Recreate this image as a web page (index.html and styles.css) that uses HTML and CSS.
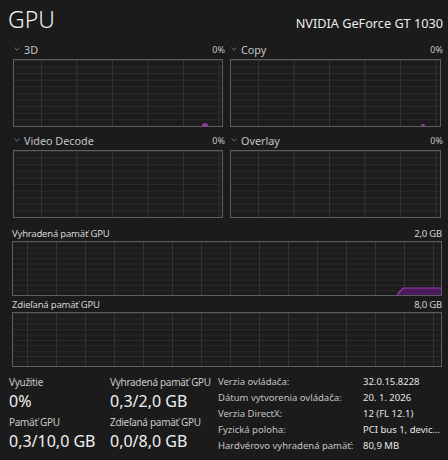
FILE: index.html
```html
<!DOCTYPE html>
<html lang="sk">
<head>
    <meta charset="UTF-8">
    <title>GPU</title>
    <link rel="stylesheet" href="styles.css">
</head>
<body>
    <div class="page">
        <header class="head">
            <h1 class="title">GPU</h1>
            <div class="model">NVIDIA GeForce GT 1030</div>
        </header>

        <section class="engines">
            <div class="engine">
                <div class="engine-head">
                    <span class="engine-name"><svg class="chev" viewBox="0 0 8 5"><polyline points="0.5,0.5 4,4 7.5,0.5"/></svg>3D</span>
                    <span class="pct">0%</span>
                </div>
                <div class="chart small"><span class="blip blip-3d"></span></div>
            </div>
            <div class="engine">
                <div class="engine-head">
                    <span class="engine-name"><svg class="chev" viewBox="0 0 8 5"><polyline points="0.5,0.5 4,4 7.5,0.5"/></svg>Copy</span>
                    <span class="pct">0%</span>
                </div>
                <div class="chart small"><span class="blip blip-copy"></span></div>
            </div>
            <div class="engine">
                <div class="engine-head">
                    <span class="engine-name"><svg class="chev" viewBox="0 0 8 5"><polyline points="0.5,0.5 4,4 7.5,0.5"/></svg>Video Decode</span>
                    <span class="pct">0%</span>
                </div>
                <div class="chart small"></div>
            </div>
            <div class="engine">
                <div class="engine-head">
                    <span class="engine-name"><svg class="chev" viewBox="0 0 8 5"><polyline points="0.5,0.5 4,4 7.5,0.5"/></svg>Overlay</span>
                    <span class="pct">0%</span>
                </div>
                <div class="chart small"></div>
            </div>
        </section>

        <section class="mem first">
            <div class="mem-head"><span>Vyhradená pamäť GPU</span><span>2,0 GB</span></div>
            <div class="chart wide">
                <svg class="usage" viewBox="0 0 44 9" preserveAspectRatio="none">
                    <polygon points="0,9 6,2 44,2 44,9" fill="#4a1a5a"/>
                    <polyline points="0,9 6,2 44,2" fill="none" stroke="#9a3cb8" stroke-width="1.2"/>
                </svg>
            </div>
        </section>

        <section class="mem">
            <div class="mem-head"><span>Zdieľaná pamäť GPU</span><span>8,0 GB</span></div>
            <div class="chart wide"></div>
        </section>

        <section class="stats">
            <div class="stat-col">
                <div class="stat-label">Využitie</div>
                <div class="stat-value">0%</div>
                <div class="stat-label">Pamäť GPU</div>
                <div class="stat-value">0,3/10,0 GB</div>
            </div>
            <div class="stat-col wide-col">
                <div class="stat-label">Vyhradená pamäť GPU</div>
                <div class="stat-value">0,3/2,0 GB</div>
                <div class="stat-label">Zdieľaná pamäť GPU</div>
                <div class="stat-value">0,0/8,0 GB</div>
            </div>
            <dl class="props">
                <dt>Verzia ovládača:</dt><dd>32.0.15.8228</dd>
                <dt>Dátum vytvorenia ovládača:</dt><dd>20. 1. 2026</dd>
                <dt>Verzia DirectX:</dt><dd>12 (FL 12.1)</dd>
                <dt>Fyzická poloha:</dt><dd>PCI bus 1, devic...</dd>
                <dt>Hardvérovo vyhradená pamäť:</dt><dd>80,9 MB</dd>
            </dl>
        </section>
    </div>
</body>
</html>
```

FILE: styles.css
```css
body {
    margin: 0;
    background: #1b1b1b;
    color: #d6d6d6;
    font-family: "Segoe UI", "Noto Sans", "Open Sans", sans-serif;
    white-space: nowrap;
}
.page {
    width: 448px;
    height: 460px;
    box-sizing: border-box;
    padding: 0 6px 0 12px;
    overflow: hidden;
}
.head {
    display: flex;
    justify-content: space-between;
    align-items: baseline;
    height: 41px;
    padding-top: 3px;
    box-sizing: border-box;
}
.title {
    margin: 0 0 0 -4px;
    font-size: 23px;
    font-weight: 300;
    line-height: 32px;
    color: #f2f2f2;
}
.model {
    font-size: 12.7px;
    color: #ececec;
    margin-right: -1px;
}

.engines {
    display: grid;
    grid-template-columns: 210px 211px;
    column-gap: 7px;
    row-gap: 5px;
    padding-left: 1px;
}
.engine-head {
    display: flex;
    justify-content: space-between;
    align-items: center;
    height: 16px;
    margin-bottom: 2px;
}
.engine-name {
    display: flex;
    align-items: center;
    font-size: 10.8px;
    color: #c4c4c4;
    margin-left: 1px;
}
.chev {
    width: 6px;
    height: 4px;
    margin-right: 4px;
    fill: none;
    stroke: #8a8a8a;
    stroke-width: 1;
}
.pct {
    font-size: 9px;
    color: #c4c4c4;
    margin-right: -2px;
}

.chart {
    position: relative;
    box-sizing: border-box;
    border: 1px solid #5e5e5e;
    background-color: #1c1c1c;
    background-image:
        linear-gradient(to right, #333 1px, transparent 1px),
        linear-gradient(to bottom, #2b2b2b 1px, transparent 1px);
}
.chart.small {
    height: 68px;
    background-size: 35.5px 100%, 100% 6.6px;
    background-position: 27px 0, 0 0;
}
.chart.wide {
    height: 55px;
    background-size: 29px 100%, 100% 5.4px;
    background-position: 14px 0, 0 0;
}

.blip {
    position: absolute;
    bottom: 0;
    height: 3px;
    border-radius: 3px 3px 0 0;
    background: #8e3aa6;
}
.blip-3d { left: 188px; width: 6px; }
.blip-copy { left: 190px; width: 4px; height: 2px; }

.mem.first { margin-top: 7px; }
.mem-head {
    display: flex;
    justify-content: space-between;
    align-items: center;
    height: 16px;
    font-size: 9.5px;
    letter-spacing: -0.2px;
    color: #d4d4d4;
}
.usage {
    position: absolute;
    right: 0;
    bottom: 0;
    width: 44px;
    height: 9px;
}

.stats {
    display: flex;
    margin: 8px 0 0 -3px;
}
.stat-col {
    width: 101px;
}
.stat-col.wide-col {
    width: 108px;
}
.stat-label {
    font-size: 10px;
    line-height: 14px;
    letter-spacing: -0.3px;
    color: #c8c8c8;
}
.stat-value {
    font-size: 16px;
    line-height: 24px;
    color: #f0f0f0;
    margin-bottom: 2px;
}
.props {
    margin: 0;
    display: grid;
    grid-template-columns: 145px auto;
    font-size: 9.5px;
    line-height: 14.2px;
}
.props dt {
    color: #c4c4c4;
}
.props dd {
    margin: 0;
    color: #e6e6e6;
}
```
